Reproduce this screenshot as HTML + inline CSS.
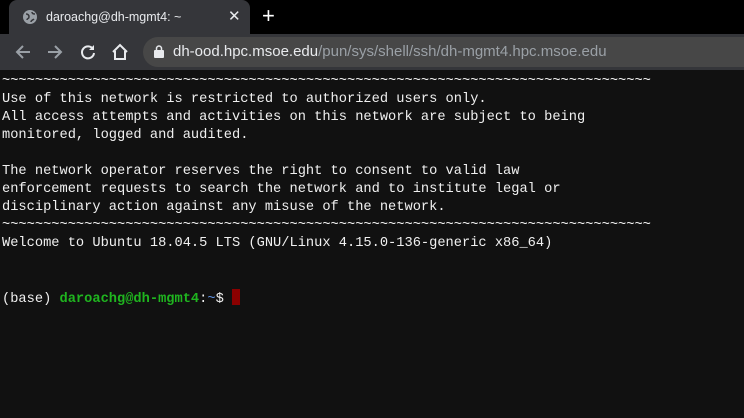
<!DOCTYPE html>
<html><head><style>
body{margin:0;width:744px;height:418px;overflow:hidden;background:#111;font-family:"Liberation Sans",sans-serif}
#tabs{position:absolute;left:0;top:0;width:744px;height:34px;background:#000}
#tab{position:absolute;left:9px;top:0;width:241px;height:34px;background:#35363a;border-radius:8px 8px 0 0}
#tab .t{position:absolute;left:37px;top:10px;font-size:12.5px;color:#e8eaed}
#tab .x{position:absolute;left:219px;top:7px;font-size:15px;color:#e8eaed}
.plus{position:absolute;left:262px;top:3px;font-size:22px;color:#fff}
#bar{position:absolute;left:0;top:34px;width:744px;height:36px;background:#35363a}
#url{position:absolute;left:143px;top:3px;width:620px;height:30px;background:#474747;border-radius:15px}
#url .u{position:absolute;left:30px;top:6px;font-size:15px;color:#e8eaed}
#url .u span{color:#9aa0a6}
pre{position:absolute;left:2px;top:73px;margin:0;font-family:"Liberation Mono",monospace;font-size:13.7px;line-height:18px;color:#f0f0f0}
.g{color:#1fb51f;font-weight:bold}
.cur{display:inline-block;width:8px;height:16px;background:#8b0000;vertical-align:-3px}
</style></head><body>
<div id="tabs">
<div id="tab">
<svg style="position:absolute;left:14px;top:10px" width="14" height="14" viewBox="0 0 14 14"><circle cx="7" cy="7" r="7" fill="#9aa0a6"/><path d="M3 4c2 0 3 1 3 3s-2 1-2 3M9 2c0 2 2 2 3 2M8 12c0-2 2-2 3-3" stroke="#35363a" stroke-width="1.5" fill="none"/></svg>
<div class="t">daroachg@dh-mgmt4: ~</div>
<div class="x">✕</div>
</div>
<div class="plus">+</div>
</div>
<div id="bar">
<svg style="position:absolute;left:14px;top:10px" width="18" height="16" viewBox="0 0 18 16"><path d="M16 8H3M9 2L3 8l6 6" stroke="#9aa0a6" stroke-width="2" fill="none"/></svg>
<svg style="position:absolute;left:46px;top:10px" width="18" height="16" viewBox="0 0 18 16"><path d="M2 8h13M9 2l6 6-6 6" stroke="#9aa0a6" stroke-width="2" fill="none"/></svg>
<svg style="position:absolute;left:79px;top:9px" width="18" height="18" viewBox="0 0 18 18"><path d="M14 6A6 6 0 1 0 15 10" stroke="#e8eaed" stroke-width="2" fill="none"/><path d="M15 2v5h-5z" fill="#e8eaed"/></svg>
<svg style="position:absolute;left:110px;top:8px" width="20" height="20" viewBox="0 0 20 20"><path d="M3 10L10 3l7 7M5 9v8h10V9" stroke="#e8eaed" stroke-width="2" fill="none"/></svg>
<div id="url">
<svg style="position:absolute;left:11px;top:8px" width="10" height="13" viewBox="0 0 10 13"><rect x="0" y="5" width="10" height="8" rx="1" fill="#e8eaed"/><path d="M2.5 5V3.5a2.5 2.5 0 0 1 5 0V5" stroke="#e8eaed" stroke-width="1.5" fill="none"/></svg>
<div class="u">dh-ood.hpc.msoe.edu<span>/pun/sys/shell/ssh/dh-mgmt4.hpc.msoe.edu</span></div>
</div>
</div>
<pre>~~~~~~~~~~~~~~~~~~~~~~~~~~~~~~~~~~~~~~~~~~~~~~~~~~~~~~~~~~~~~~~~~~~~~~~~~~~~~~~
Use of this network is restricted to authorized users only.
All access attempts and activities on this network are subject to being
monitored, logged and audited.

The network operator reserves the right to consent to valid law
enforcement requests to search the network and to institute legal or
disciplinary action against any misuse of the network.
~~~~~~~~~~~~~~~~~~~~~~~~~~~~~~~~~~~~~~~~~~~~~~~~~~~~~~~~~~~~~~~~~~~~~~~~~~~~~~~
Welcome to Ubuntu 18.04.5 LTS (GNU/Linux 4.15.0-136-generic x86_64)


(base) <span class="g">daroachg@dh-mgmt4</span>:<span style="color:#5c8fe0">~</span>$ <span class="cur"></span></pre>
</body></html>
